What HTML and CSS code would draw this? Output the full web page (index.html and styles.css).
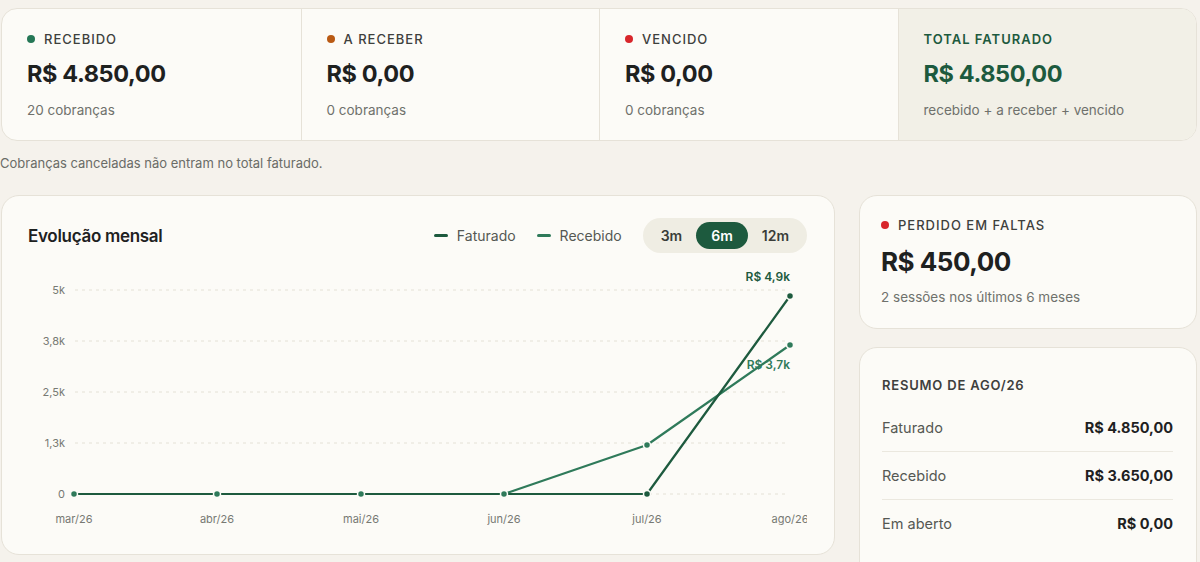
FILE: index.html
```html
<!DOCTYPE html>
<html lang="pt-BR">
  <head>
    <meta charset="UTF-8" />
    <title>Financeiro</title>
    <link rel="stylesheet" href="styles.css">
  </head>
  <body>
    <div class="page">
      <!-- resumo do periodo -->
      <div class="stats">
        <div class="stat">
          <div class="stat-label"><span class="dot green"></span>Recebido</div>
          <div class="stat-value">R$ 4.850,00</div>
          <div class="stat-sub">20 cobranças</div>
        </div>
        <div class="stat">
          <div class="stat-label"><span class="dot orange"></span>A receber</div>
          <div class="stat-value">R$ 0,00</div>
          <div class="stat-sub">0 cobranças</div>
        </div>
        <div class="stat">
          <div class="stat-label"><span class="dot red"></span>Vencido</div>
          <div class="stat-value">R$ 0,00</div>
          <div class="stat-sub">0 cobranças</div>
        </div>
        <div class="stat total">
          <div class="stat-label">Total faturado</div>
          <div class="stat-value">R$ 4.850,00</div>
          <div class="stat-sub">recebido + a receber + vencido</div>
        </div>
      </div>
      <p class="note">Cobranças canceladas não entram no total faturado.</p>

      <div class="main">
        <div class="card chart-card">
          <div class="chart-head">
            <h2>Evolução mensal</h2>
            <div class="legend">
              <span class="swatch fat"></span>Faturado
            </div>
            <div class="legend">
              <span class="swatch rec"></span>Recebido
            </div>
            <div class="range">
              <button>3m</button>
              <button class="active">6m</button>
              <button>12m</button>
            </div>
          </div>
          <svg class="chart" width="779" height="280" viewBox="0 0 779 280">
            <g class="grid">
              <line x1="47" y1="29" x2="760" y2="29" />
              <line x1="47" y1="80" x2="760" y2="80" />
              <line x1="47" y1="131" x2="760" y2="131" />
              <line x1="47" y1="182" x2="760" y2="182" />
              <line x1="47" y1="233" x2="760" y2="233" />
            </g>
            <g class="ylabels">
              <text x="37" y="33">5k</text>
              <text x="37" y="84">3,8k</text>
              <text x="37" y="135">2,5k</text>
              <text x="37" y="186">1,3k</text>
              <text x="37" y="237">0</text>
            </g>
            <g class="xlabels">
              <text x="46" y="262">mar/26</text>
              <text x="189" y="262">abr/26</text>
              <text x="333" y="262">mai/26</text>
              <text x="476" y="262">jun/26</text>
              <text x="619" y="262">jul/26</text>
              <text x="762" y="262">ago/26</text>
            </g>
            <polyline class="line rec" points="46,233 189,233 333,233 476,233 619,184 762,84" />
            <polyline class="line fat" points="46,233 189,233 333,233 476,233 619,233 762,35" />
            <g class="dots rec">
              <circle cx="46" cy="233" r="3.5" />
              <circle cx="189" cy="233" r="3.5" />
              <circle cx="333" cy="233" r="3.5" />
              <circle cx="476" cy="233" r="3.5" />
              <circle cx="619" cy="184" r="3.5" />
              <circle cx="762" cy="84" r="3.5" />
            </g>
            <g class="dots fat">
              <circle cx="619" cy="233" r="3.5" />
              <circle cx="762" cy="35" r="3.5" />
            </g>
            <text class="val fat" x="762" y="20">R$ 4,9k</text>
            <text class="val rec" x="762" y="108">R$ 3,7k</text>
          </svg>
        </div>

        <div class="side">
          <div class="card lost">
            <div class="stat-label"><span class="dot red"></span>Perdido em faltas</div>
            <div class="lost-value">R$ 450,00</div>
            <div class="stat-sub">2 sessões nos últimos 6 meses</div>
          </div>
          <div class="card month">
            <h4>Resumo de ago/26</h4>
            <div class="row">
              <span>Faturado</span>
              <b>R$ 4.850,00</b>
            </div>
            <div class="row">
              <span>Recebido</span>
              <b>R$ 3.650,00</b>
            </div>
            <div class="row">
              <span>Em aberto</span>
              <b>R$ 0,00</b>
            </div>
          </div>
        </div>
      </div>
    </div>
  </body>
</html>
```

FILE: styles.css
```css
body {
  margin: 0;
  padding: 0;
  background-color: #f5f2ec;
  font-family: Inter, "Noto Sans", sans-serif;
  color: #1e211f;
}

.page {
  padding: 8px 3px 0 1px;
}

.stats {
  display: grid;
  grid-template-columns: repeat(4, 1fr);
  border: 1px solid #e6e2d8;
  border-radius: 16px;
  background-color: #fcfbf7;
  overflow: hidden;
}

.stat {
  padding: 22px 25px 20px;
  border-left: 1px solid #e6e2d8;
}

.stat:first-child {
  border-left: none;
}

.stat.total {
  background-color: #f2f0e7;
}

.stat-label {
  display: flex;
  align-items: center;
  height: 16px;
  font-size: 13px;
  font-weight: 500;
  letter-spacing: 1px;
  text-transform: uppercase;
  color: #3e403d;
}

.dot {
  width: 8px;
  height: 8px;
  margin-right: 9px;
  border-radius: 50%;
}

.dot.green {
  background-color: #257756;
}

.dot.orange {
  background-color: #b95a14;
}

.dot.red {
  background-color: #d8262b;
}

.stat-value {
  margin-top: 12px;
  font-size: 23.5px;
  line-height: 30px;
  font-weight: 700;
  letter-spacing: -0.4px;
}

.stat-sub {
  margin-top: 11px;
  font-size: 13.5px;
  line-height: 20px;
  color: #6f716c;
}

.total .stat-label,
.total .stat-value {
  color: #1d5a3e;
  font-weight: 600;
}

.total .stat-value {
  font-weight: 700;
}

.note {
  margin: 12px 0 22px -1px;
  font-size: 13px;
  line-height: 20px;
  color: #6a6c67;
}

.main {
  display: grid;
  grid-template-columns: 1fr 338px;
  gap: 24px;
}

.card {
  box-sizing: border-box;
  border: 1px solid #e6e2d8;
  border-radius: 18px;
  background-color: #fcfbf7;
}

.chart-card {
  height: 360px;
  padding: 22px 27px 0 26px;
}

.chart-head {
  display: flex;
  align-items: center;
  height: 35px;
}

.chart-head h2 {
  margin: 0 auto 0 0;
  font-size: 17px;
  font-weight: 600;
  letter-spacing: -0.3px;
}

.legend {
  display: flex;
  align-items: center;
  margin-right: 21px;
  font-size: 14px;
  color: #555853;
}

.swatch {
  width: 14px;
  height: 3px;
  margin-right: 9px;
  border-radius: 2px;
}

.swatch.fat {
  background-color: #1d5a3e;
}

.swatch.rec {
  background-color: #2f7a5a;
}

.range {
  display: flex;
  padding: 4px;
  border-radius: 18px;
  background-color: #efede3;
}

.range button {
  height: 27px;
  padding: 0 14px;
  border: none;
  border-radius: 14px;
  background: none;
  font-family: inherit;
  font-size: 14px;
  font-weight: 600;
  color: #3a3d39;
}

.range button.active {
  padding: 0 15px;
  background-color: #1d5a3e;
  color: #fff;
}

.chart {
  display: block;
  margin-top: 8px;
  overflow: hidden;
}

.grid line {
  stroke: #e4e1d6;
  stroke-width: 1;
  stroke-dasharray: 3 4;
}

.ylabels text {
  font-size: 11px;
  fill: #777973;
  text-anchor: end;
}

.xlabels text {
  font-size: 11px;
  fill: #777973;
  text-anchor: middle;
}

.line {
  fill: none;
  stroke-width: 2.2;
  stroke-linejoin: round;
}

.line.fat {
  stroke: #1d5a3e;
}

.line.rec {
  stroke: #2f7a5a;
}

.dots circle {
  stroke: #fcfbf7;
  stroke-width: 1.5;
}

.dots.fat circle {
  fill: #1d5a3e;
}

.dots.rec circle {
  fill: #2f7a5a;
}

.val {
  font-size: 12px;
  font-weight: 600;
  text-anchor: end;
}

.val.fat {
  fill: #1d5a3e;
}

.val.rec {
  fill: #2f7a5a;
}

.side {
  display: flex;
  flex-direction: column;
  gap: 18px;
}

.lost {
  padding: 21px 22px 21px 21px;
}

.lost-value {
  margin-top: 13px;
  font-size: 26px;
  line-height: 32px;
  font-weight: 700;
  letter-spacing: -0.5px;
}

.lost .stat-sub {
  margin-top: 9px;
}

.month {
  height: 240px;
  padding: 0 23px 0 22px;
}

.month h4 {
  margin: 29px 0 11px;
  font-size: 13px;
  line-height: 16px;
  font-weight: 600;
  letter-spacing: 0.8px;
  text-transform: uppercase;
  color: #3e403d;
}

.row {
  display: flex;
  justify-content: space-between;
  align-items: center;
  height: 47px;
  border-bottom: 1px solid #ebe8df;
  font-size: 14.5px;
  color: #555853;
}

.row:last-child {
  border-bottom: none;
}

.row b {
  font-weight: 700;
  color: #1e211f;
}
```
